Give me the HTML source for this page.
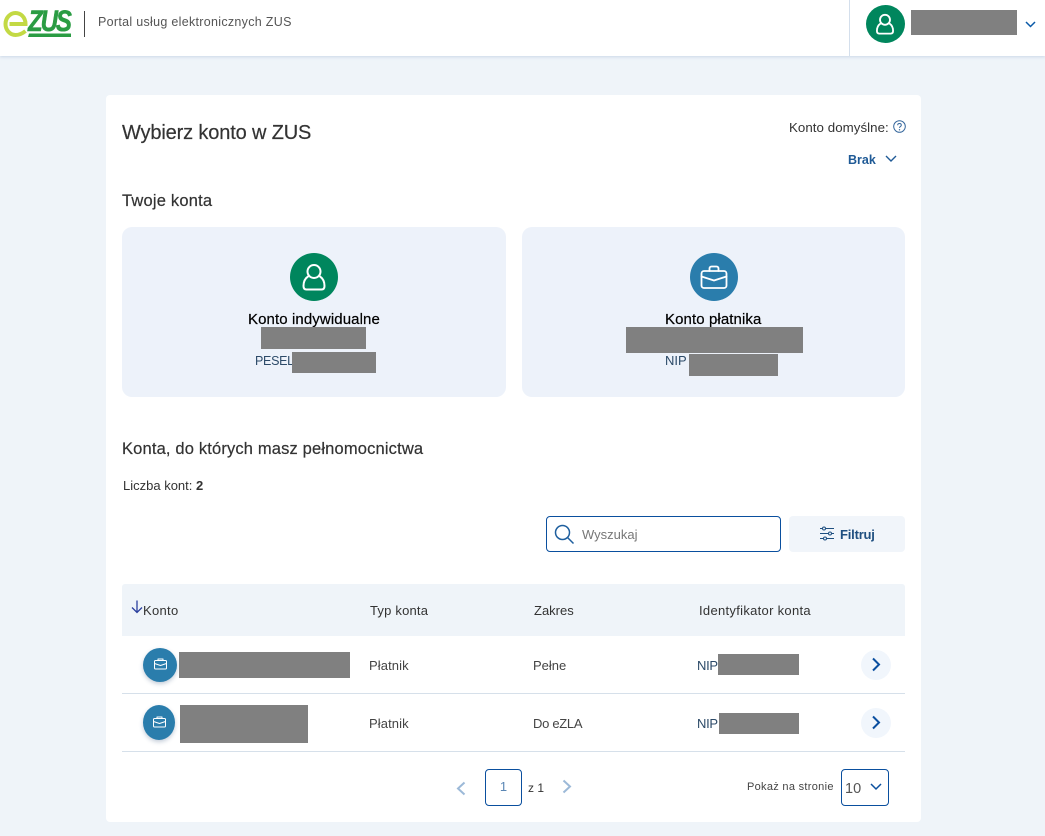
<!DOCTYPE html>
<html lang="pl"><head><meta charset="utf-8"><title>Portal usług elektronicznych ZUS</title>
<style>
html,body{margin:0;padding:0}
body{width:1045px;height:836px;position:relative;overflow:hidden;background:#eff4f9;font-family:"Liberation Sans",sans-serif;color:#333}
.a{position:absolute;white-space:nowrap}
.r{position:absolute;background:#808080}
.t{position:absolute;white-space:nowrap;line-height:18px;font-size:13px;color:#333}
svg{position:absolute;display:block;overflow:visible}
.ic{fill:none;stroke:#fff;stroke-linecap:round;stroke-linejoin:round}
</style></head><body>
<div class="a" style="left:0;top:0;width:1045px;height:56px;background:#fff;box-shadow:0 1px 3px rgba(120,150,190,.3)"></div>
<svg style="left:0;top:0" width="80" height="40" viewBox="0 0 80 40">
<path d="M9.500 24H25.500C25.500 17 20.500 13 15.500 13C10 13 5.500 18 5.500 24C5.500 30 10 35 15.500 35C19.500 35 22.500 33.500 25.500 31" fill="none" stroke="#c3d944" stroke-width="4"/>
<path d="M29 33.500H71V37H28Z" fill="#2a9c43"/>
</svg>
<div class="a" style="left:28px;top:7px;font:italic 700 30px/30px 'Liberation Sans',sans-serif;color:#2a9c43;letter-spacing:-2.600px;transform:scaleX(.8);transform-origin:0 0;-webkit-text-stroke:.6px #2a9c43">ZUS</div>
<div class="a" style="left:84px;top:11px;width:1px;height:26px;background:#444"></div>
<div class="t" style="left:98px;top:13px;font-size:12.500px;color:#555;letter-spacing:.3px">Portal usług elektronicznych ZUS</div>
<div class="a" style="left:849px;top:0;width:1px;height:56px;background:#d4dfec"></div>
<div class="a" style="left:866px;top:5px;width:39px;height:38px;border-radius:50%;background:#00865d"></div>
<svg class="ic" style="left:875px;top:13px" width="20" height="22" viewBox="0 0 26 28" stroke-width="2.400"><circle cx="13" cy="8.500" r="6.500"/><path d="M7 13.500C4 15.500 2.500 19 2.500 23C2.500 25.500 3.500 26.500 5.500 26.500H20.500C22.500 26.500 23.500 25.500 23.500 23C23.500 19 22 15.500 19 13.500"/></svg>
<div class="r" style="left:911px;top:10px;width:106px;height:25px"></div>
<svg style="left:1025px;top:21px" width="11" height="7" viewBox="0 0 11 7"><path d="M1 1L5.500 5.500L10 1" fill="none" stroke="#0a5aa8" stroke-width="1.500"/></svg>

<div class="a" style="left:106px;top:95px;width:815px;height:727px;background:#fff;border-radius:4px"></div>
<div class="t" style="left:122px;top:121px;font-size:20px;line-height:24px;color:#333;letter-spacing:-.15px;-webkit-text-stroke:.2px #333">Wybierz konto w ZUS</div>
<div class="t" style="left:789px;top:119px;font-size:13.300px;letter-spacing:.05px">Konto domyślne:</div>
<svg style="left:893px;top:120px" width="13" height="13" viewBox="0 0 13 13"><circle cx="6.500" cy="6.500" r="5.800" fill="none" stroke="#33659b"/><path d="M4.700 5.200C4.700 3 8.300 3 8.300 5.200C8.300 6.500 6.500 6.400 6.500 7.900" fill="none" stroke="#33659b"/><circle cx="6.500" cy="9.800" r=".7" fill="#33659b"/></svg>
<div class="t" style="left:848px;top:151px;font-weight:700;font-size:12.500px;color:#1f5a96">Brak</div>
<svg style="left:885px;top:155px" width="12" height="8" viewBox="0 0 12 8"><path d="M1 1L6 6L11 1" fill="none" stroke="#1f5a96" stroke-width="1.400"/></svg>
<div class="t" style="left:122px;top:192px;font-size:16.500px;color:#333;letter-spacing:.2px;-webkit-text-stroke:.2px #333">Twoje konta</div>

<div class="a" style="left:122px;top:227px;width:384px;height:170px;border-radius:10px;background:#edf2fa"></div>
<div class="a" style="left:522px;top:227px;width:383px;height:170px;border-radius:10px;background:#edf2fa"></div>
<div class="a" style="left:290px;top:253px;width:48px;height:48px;border-radius:50%;background:#00865d"></div>
<svg class="ic" style="left:301px;top:263px" width="26" height="28" viewBox="0 0 26 28" stroke-width="2"><circle cx="13" cy="8.500" r="6.500"/><path d="M7 13.500C4 15.500 2.500 19 2.500 23C2.500 25.500 3.500 26.500 5.500 26.500H20.500C22.500 26.500 23.500 25.500 23.500 23C23.500 19 22 15.500 19 13.500"/></svg>
<div class="t" style="left:248px;top:311px;font-size:15px;color:#000;-webkit-text-stroke:.2px #000;letter-spacing:.1px">Konto indywidualne</div>
<div class="r" style="left:261px;top:327px;width:105px;height:22px"></div>
<div class="t" style="left:255px;top:352px;font-size:12.500px;letter-spacing:-.3px;color:#2c4a68">PESEL</div>
<div class="r" style="left:292px;top:352px;width:84px;height:21px"></div>

<div class="a" style="left:690px;top:253px;width:48px;height:48px;border-radius:50%;background:#2a7dac"></div>
<svg class="ic" style="left:700px;top:265px" width="28" height="25" viewBox="0 0 28 25" stroke-width="1.800"><rect x="1.500" y="6" width="25" height="17" rx="2.500"/><path d="M9.500 6V3.500C9.500 2.500 10.200 1.500 11.500 1.500H16.500C17.800 1.500 18.500 2.500 18.500 3.500V6M1.500 11.500L14 15.500L26.500 11.500"/></svg>
<div class="t" style="left:665px;top:311px;font-size:15px;color:#000;-webkit-text-stroke:.2px #000;letter-spacing:.1px">Konto płatnika</div>
<div class="r" style="left:626px;top:327px;width:177px;height:26px"></div>
<div class="t" style="left:665px;top:352px;color:#2c4a68">NIP</div>
<div class="r" style="left:689px;top:354px;width:89px;height:22px"></div>

<div class="t" style="left:122px;top:440px;font-size:16.500px;color:#333;letter-spacing:.16px;-webkit-text-stroke:.2px #333">Konta, do których masz pełnomocnictwa</div>
<div class="t" style="left:123px;top:477px;font-size:13px">Liczba kont: <b>2</b></div>

<div class="a" style="left:546px;top:516px;width:233px;height:34px;border:1.500px solid #0a4f9e;border-radius:4px;background:#fff"></div>
<svg style="left:554px;top:524px" width="21" height="21" viewBox="0 0 21 21"><circle cx="8.500" cy="8.500" r="7" fill="none" stroke="#1f5f9e" stroke-width="1.500"/><path d="M13.500 13.500L19.500 19.500" stroke="#1f5f9e" stroke-width="1.500"/></svg>
<div class="t" style="left:582px;top:526px;color:#777">Wyszukaj</div>
<div class="a" style="left:789px;top:516px;width:116px;height:36px;background:#f1f5fa;border-radius:4px"></div>
<svg style="left:820px;top:526px" width="14" height="15" viewBox="0 0 14 15" fill="none" stroke="#1f4f80" stroke-width="1"><path d="M0 2.500H14M0 7.500H14M0 12.500H14"/><circle cx="4" cy="2.500" r="1.500" fill="#f1f5fa"/><circle cx="10" cy="7.500" r="1.500" fill="#f1f5fa"/><circle cx="5" cy="12.500" r="1.500" fill="#f1f5fa"/></svg>
<div class="t" style="left:840px;top:526px;font-weight:700;font-size:13px;color:#1f4f80;letter-spacing:-.2px">Filtruj</div>

<div class="a" style="left:122px;top:584px;width:783px;height:52px;background:#eff4f9;border-radius:3px 3px 0 0"></div>
<svg style="left:131px;top:600px" width="12" height="14" viewBox="0 0 12 14" fill="none" stroke="#2a3f9e" stroke-width="1.300"><path d="M6 .5V12.500M1 7.500L6 12.500L11 7.500"/></svg>
<div class="t" style="left:143px;top:602px;letter-spacing:.3px">Konto</div>
<div class="t" style="left:370px;top:602px;letter-spacing:.2px">Typ konta</div>
<div class="t" style="left:534px;top:602px">Zakres</div>
<div class="t" style="left:699px;top:602px;letter-spacing:.3px">Identyfikator konta</div>

<div class="a" style="left:143px;top:648px;width:34px;height:34px;border-radius:50%;background:#2a7dac;box-shadow:0 2px 4px rgba(60,90,130,.3)"></div>
<svg class="ic" style="left:154px;top:658px" width="13" height="12" viewBox="0 0 13 12" stroke-width="1"><rect x=".5" y="2.500" width="12" height="8.500" rx="1"/><path d="M4 2.500V1H9V2.500M.5 5.500L6.500 7.500L12.500 5.500"/></svg>
<div class="r" style="left:179px;top:652px;width:171px;height:26px"></div>
<div class="t" style="left:369px;top:657px;color:#444;letter-spacing:.1px">Płatnik</div>
<div class="t" style="left:533px;top:657px;color:#444">Pełne</div>
<div class="t" style="left:697px;top:657px;color:#2c4a68;letter-spacing:-.3px">NIP</div>
<div class="r" style="left:718px;top:654px;width:81px;height:21px"></div>
<div class="a" style="left:861px;top:650px;width:30px;height:30px;border-radius:50%;background:#f1f6fc"></div>
<svg style="left:871px;top:657px" width="10" height="15" viewBox="0 0 10 15"><path d="M2 1.500L8 7.500L2 13.500" fill="none" stroke="#0b4fa0" stroke-width="2"/></svg>
<div class="a" style="left:122px;top:693px;width:783px;height:1px;background:#d6e0ea"></div>

<div class="a" style="left:143px;top:705px;width:32px;height:35px;border-radius:50%;background:#2a7dac;box-shadow:0 2px 4px rgba(60,90,130,.3)"></div>
<svg class="ic" style="left:153px;top:716px" width="13" height="12" viewBox="0 0 13 12" stroke-width="1"><rect x=".5" y="2.500" width="12" height="8.500" rx="1"/><path d="M4 2.500V1H9V2.500M.5 5.500L6.500 7.500L12.500 5.500"/></svg>
<div class="r" style="left:180px;top:705px;width:128px;height:38px"></div>
<div class="t" style="left:369px;top:715px;color:#444;letter-spacing:.1px">Płatnik</div>
<div class="t" style="left:533px;top:715px;color:#444;letter-spacing:-.3px">Do eZLA</div>
<div class="t" style="left:697px;top:715px;color:#2c4a68;letter-spacing:-.3px">NIP</div>
<div class="r" style="left:719px;top:713px;width:80px;height:21px"></div>
<div class="a" style="left:861px;top:708px;width:30px;height:30px;border-radius:50%;background:#f1f6fc"></div>
<svg style="left:871px;top:715px" width="10" height="15" viewBox="0 0 10 15"><path d="M2 1.500L8 7.500L2 13.500" fill="none" stroke="#0b4fa0" stroke-width="2"/></svg>
<div class="a" style="left:122px;top:751px;width:783px;height:1px;background:#d6e0ea"></div>

<svg style="left:456px;top:781px" width="10" height="15" viewBox="0 0 10 15"><path d="M8.500 1.500L2 7.500L8.500 13.500" fill="none" stroke="#9cb9d8" stroke-width="2"/></svg>
<div class="a" style="left:485px;top:769px;width:35px;height:35px;border:1.300px solid #0a4f9e;border-radius:4px"></div>
<div class="t" style="left:485px;top:778px;width:37px;text-align:center;font-size:13px;color:#5a86b4">1</div>
<div class="t" style="left:528px;top:779px;font-size:12px;color:#333">z 1</div>
<svg style="left:562px;top:779px" width="10" height="15" viewBox="0 0 10 15"><path d="M1.500 1.500L8 7.500L1.500 13.500" fill="none" stroke="#9cb9d8" stroke-width="2"/></svg>
<div class="t" style="left:747px;top:778px;font-size:11px;color:#444;letter-spacing:.3px">Pokaż na stronie</div>
<div class="a" style="left:841px;top:769px;width:46px;height:35px;border:1.300px solid #0a4f9e;border-radius:4px"></div>
<div class="t" style="left:845px;top:780px;font-size:14.500px;color:#555">10</div>
<svg style="left:870px;top:783px" width="12" height="8" viewBox="0 0 12 8"><path d="M1 1L6 6L11 1" fill="none" stroke="#0a4f9e" stroke-width="1.500"/></svg>
</body></html>
